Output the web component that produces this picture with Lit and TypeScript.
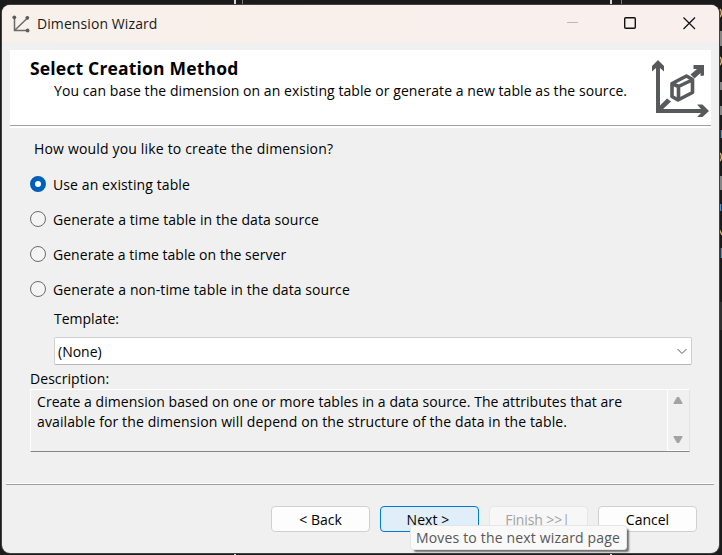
import { LitElement, html, css, svg } from "lit";
import { customElement, state } from "lit/decorators.js";

@customElement("app-root")
export class AppRoot extends LitElement {
  @state() private selected = 0;

  private methods = [
    "Use an existing table",
    "Generate a time table in the data source",
    "Generate a time table on the server",
    "Generate a non-time table in the data source",
  ];

  static styles = css`
    :host { display: block; position: relative; width: 722px; height: 555px; overflow: hidden; background: #1b1b1b;
      font: 14px/20px "Open Sans", "Noto Sans", sans-serif; color: #000; }
    * { box-sizing: border-box; }
    .backdrop { position: absolute; left: 0; top: 0; display: block; }
    .window { position: relative; margin-left: 2px; top: 5px; width: 717px; height: 548px; border-radius: 8px;
      overflow: hidden; background: #f0f0f0; display: flex; flex-direction: column; }
    .edge { position: absolute; left: 1px; top: 4px; width: 719px; height: 550px; border: 1px solid #414141; border-radius: 9px; }
    .titlebar { height: 37px; flex: none; display: flex; align-items: center; padding-left: 10px;
      background: linear-gradient(90deg, #f8f1eb 0%, #f9f0ea 30%, #f9efec 60%, #f9f0ee 100%); }
    .titlebar span { margin-left: 7px; flex: 1; color: #1a1a1a; letter-spacing: 0.09px; }
    .header { margin: 8px 8px 0 8px; height: 78px; flex: none; background: #fff; display: flex; padding-left: 20px; position: relative; }
    .header::after { content: ""; position: absolute; left: 0; right: 0; top: 75px; height: 1px; background: #a0a0a0; }
    .heads { flex: 1; padding-top: 7px; }
    h1 { margin: 0; font-size: 17.5px; line-height: 22px; font-weight: 700; letter-spacing: 0.18px; }
    .sub { padding-left: 24px; line-height: 20px; margin-top: 2px; letter-spacing: 0.07px; }
    .cube { margin-top: 8px; flex: none; }
    .body { padding: 11px 27px 0 28px; flex: none; }
    .q { padding-left: 4px; letter-spacing: 0.17px; }
    .radios { margin-top: 8px; }
    .radio { height: 35px; display: flex; align-items: center; gap: 7px; }
    .dot { width: 16px; height: 16px; margin-bottom: 2px; border-radius: 50%; border: 1px solid #6b6b6b; background: #f4f4f4; }
    .dot.on { border: 5px solid #005fb8; background: #fff; }
    .m0 { letter-spacing: 0.1px; }
    .m1 { letter-spacing: 0.08px; }
    .m2 { letter-spacing: 0.04px; }
    .m3 { letter-spacing: 0.09px; }
    .template { padding-left: 24px; margin-top: 2px; }
    .select { margin-top: 8px; height: 28px; background: #fff; border: 1px solid #cfcfcf; border-bottom-color: #b5b5b5;
      border-radius: 2px; display: flex; align-items: center; justify-content: space-between; padding: 2px 3px 0; }
    .desc { margin-top: 4px; letter-spacing: 0.06px; }
    .box { height: 63px; width: 660px; border: 1px solid #fff; border-right-color: #e3e3e3; border-bottom-color: #868686; display: flex; }
    .box p { margin: 2px 0 0 6px; flex: 1; line-height: 20px; white-space: nowrap; }
    .l1 { letter-spacing: 0.06px; }
    .l2 { letter-spacing: 0.115px; }
    .bar { width: 22px; border-left: 1px solid #fff; border-bottom: 1px solid #fff; display: flex; flex-direction: column;
      justify-content: space-between; align-items: center; padding: 6px 1px 6px 0; }
    .rule { margin: 31px 5px 0 4px; height: 2px; flex: none; border-top: 1px solid #fff; background: #a0a0a0; }
    .buttons { display: flex; justify-content: flex-end; padding: 21px 22px 0 0; }
    .btn { width: 99px; height: 26px; border: 1px solid #d0d0d0; border-radius: 4px; background: #fdfdfd; color: #000; font: inherit;
      padding: 2px 0 0; text-align: center; line-height: 22px; margin-left: 10px; white-space: pre; }
    .btn.hot { background: #e0eef9; border-color: #0078d4; padding-right: 3px; letter-spacing: 0.1px; }
    .btn.off { background: #f7f7f7; border-color: #e6e6e6; color: #a2a2a2; padding-right: 2px; letter-spacing: -0.1px; }
    .tip { position: absolute; left: 410px; top: 525px; width: 217px; height: 25px; border: 1px solid #e5e5e5; border-radius: 3px;
      background: #f9f9f9; color: #575757; padding-left: 5px; line-height: 23px; white-space: nowrap; letter-spacing: 0.17px;
      box-shadow: 3px 3px 2px -1px #6f6f6f; }
  `;

  render() {
    return html`
      <svg class="backdrop" width="722" height="555" viewBox="0 0 722 555">
        <path d="M235 0V5M611 0V5M235 553V555M611 553V555" stroke="#d8d8d8" stroke-width="2" />
        <path d="M242.500 0V5M621.500 0V5" stroke="#777" />
        <path d="M718 302H722V330H718Z" fill="#303030" />
        <path d="M720.500 31V46M720.500 82V90M720.500 106V115M720.500 176V190" stroke="#858585" stroke-width="3" />
        <path d="M720 9Q723 13 720 17M720 57Q723 61 720 65M720 153Q723 157 720 161M719 229L722 235" stroke="#d3a868" stroke-width="1.500" fill="none" />
        <path d="M721.500 130V138M720.500 204V211M721.500 248V258" stroke="#4c8fd0" stroke-width="1.500" />
      </svg>
      <div class="edge"></div>
      <div class="window">
        <div class="titlebar">
          <svg width="18" height="18" viewBox="0 0 18 18">${svg`<g stroke="#6b6b6b" stroke-width="1.500" fill="none"><path d="M2.500 2V15.500H16M2.500 15.500L15 3.500"/></g><g fill="#5b5b5b"><circle cx="2.300" cy="2.300" r="1.900"/><circle cx="15.300" cy="2.800" r="1.900"/><circle cx="15.600" cy="15.500" r="1.900"/></g>`}</svg>
          <span>Dimension Wizard</span>
          <svg width="152" height="37" viewBox="0 0 152 37" fill="none">
            <path d="M-1 17.500H11" stroke="#bdb8b6" />
            <rect x="57.700" y="12.700" width="10.600" height="10.600" rx="1" stroke="#111" stroke-width="1.400" />
            <path d="M116.500 12.500L128 24M128 12.500L116.500 24" stroke="#111" stroke-width="1.200" />
          </svg>
        </div>
        <div class="header">
          <div class="heads"><h1>Select Creation Method</h1><div class="sub">You can base the dimension on an existing table or generate a new table as the source.</div></div>
          <svg class="cube" width="60" height="60" viewBox="0 0 60 60">
            <g fill="#58595b">
              <path d="M7 2L13 8V13.500L9 10V51H50L46.500 47V46.500H51.500L58 53L51.500 59H46.500V58.500L50 55H5V10L1 13.500V8Z" />
              <path d="M7 49.500L16 40.500L20 43.500L9 54Z" />
              <path d="M42.500 7H53V17.500L49.500 18V15L43.500 20.500L39.500 16.500L46 11H42.500Z" />
            </g>
            <path d="M21 25.500L35.500 18L41.500 21.500V34.500L27 42L21 38.500ZM21 25.500L27.500 28.500L41 22M27.500 28.500V42" fill="none" stroke="#58595b" stroke-width="3.600" stroke-linejoin="round" />
          </svg>
        </div>
        <div class="body">
          <div class="q">How would you like to create the dimension?</div>
          <div class="radios">
            ${this.methods.map((m, i) => html`<div class="radio" @click=${() => (this.selected = i)}><i class="dot ${i === this.selected ? "on" : ""}"></i><span class="m${i}">${m}</span></div>`)}
          </div>
          <div class="template"><span>Template:</span>
            <div class="select"><span>(None)</span><svg width="12" height="8" viewBox="0 0 12 8"><path d="M1.500 1L6 5.500L10.500 1" fill="none" stroke="#555" /></svg></div>
          </div>
          <div class="desc">Description:</div>
          <div class="box">
            <p><span class="l1">Create a dimension based on one or more tables in a data source. The attributes that are</span><br /><span class="l2">available for the dimension will depend on the structure of the data in the table.</span></p>
            <div class="bar">
              <svg width="10" height="9" viewBox="0 0 10 9"><path d="M4 1H6L9.500 7V8H0.500V7Z" fill="#a3a3a3" /></svg>
              <svg width="10" height="9" viewBox="0 0 10 9"><path d="M4 8H6L9.500 2V1H0.500V2Z" fill="#a3a3a3" /></svg>
            </div>
          </div>
        </div>
        <div class="rule"></div>
        <div class="buttons">
          <button class="btn">&lt; Back</button><button class="btn hot">Next &gt;</button><button class="btn off">Finish &gt;&gt;|</button><button class="btn">Cancel</button>
        </div>
      </div>
      <div class="tip">Moves to the next wizard page</div>
    `;
  }
}
